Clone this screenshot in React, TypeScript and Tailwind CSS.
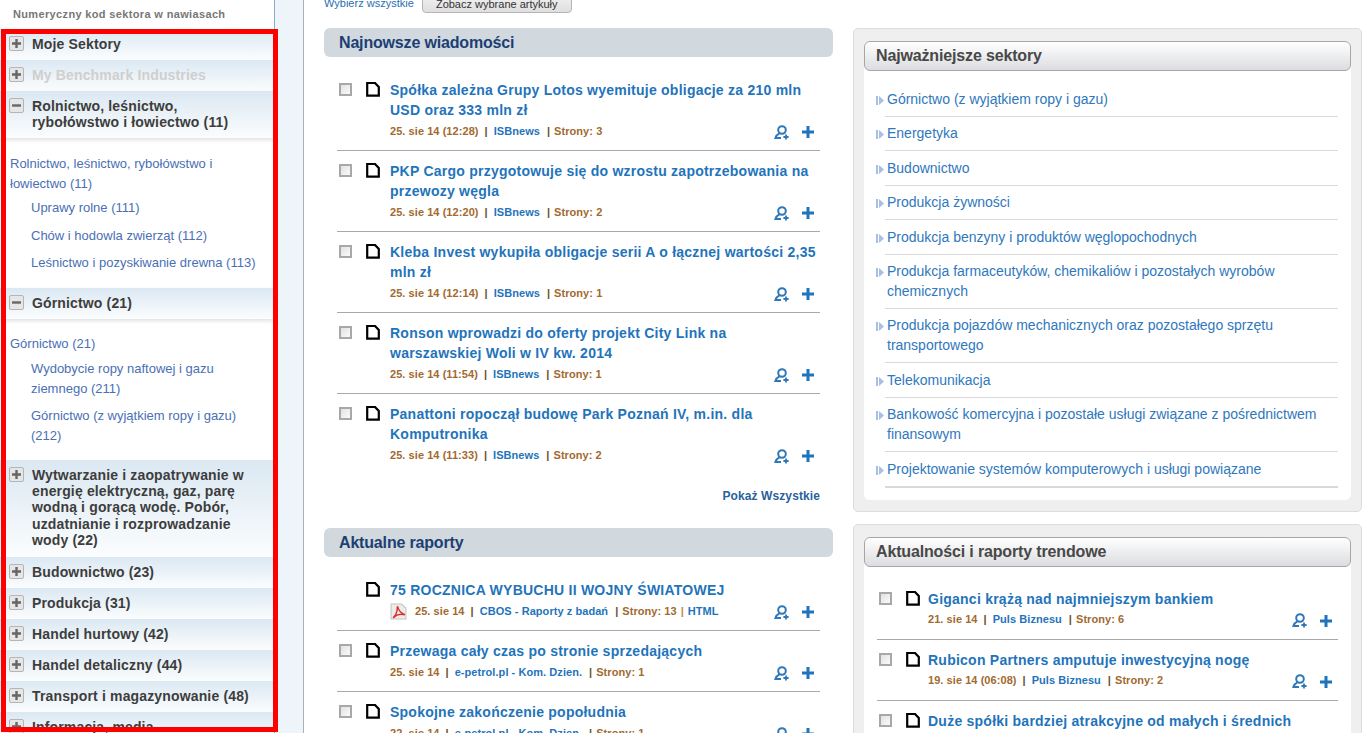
import React from "react";

const Doc = () => (
  <svg width="14" height="15" viewBox="0 0 14 15" className="shrink-0">
    <path d="M1.2 1H9L12.8 5V13.7H1.2Z" fill="#fff" stroke="#000" strokeWidth="2.2" />
  </svg>
);
const Box = () => (
  <span className="block w-[13px] h-[13px] shrink-0 border-2 border-[#a8a8a8] bg-gradient-to-br from-[#e2e2e2] to-[#fafafa]" />
);
const Actions = () => (
  <span className="flex items-center gap-[12px] pr-[6px] translate-y-[1px] shrink-0">
    <svg width="16" height="15" viewBox="0 0 16 15">
      <circle cx="8" cy="5" r="3.8" fill="none" stroke="#2f78b7" strokeWidth="2" />
      <path d="M5.4 8.4C3.4 9.4 2 10.8 1.4 13H7" fill="none" stroke="#2f78b7" strokeWidth="2" />
      <path d="M12 9.4V14.6M9.4 12H14.6" stroke="#2f78b7" strokeWidth="1.8" />
    </svg>
    <svg width="12" height="12" viewBox="0 0 12 12">
      <path d="M6 0V12M0 6H12" stroke="#1f74bb" strokeWidth="3" />
    </svg>
  </span>
);
const Pdf = () => (
  <svg width="17" height="17" viewBox="0 0 16 16" className="shrink-0 mr-[8px]">
    <path d="M1 1H11L15 5V15H1Z" fill="#ececec" stroke="#c4c4c4" />
    <path d="M7 3C7 7 6 11 3 14C6 11 10 10 14 11C11 10 8 7 7 3Z" fill="none" stroke="#d8322b" strokeWidth="1.4" />
  </svg>
);

const Toggle = ({ open }: { open?: boolean }) => (
  <span className="flex items-center justify-center w-[15px] h-[15px] shrink-0 rounded-[2px] border border-[#b5b5b5] bg-[#e6e6e6]">
    <svg width="9" height="9" viewBox="0 0 9 9">
      <path d={open ? "M0 4.5H9" : "M4.5 0V9M0 4.5H9"} stroke="#666" strokeWidth="2.4" />
    </svg>
  </span>
);

const Head = ({
  label,
  open,
  muted,
  h,
  shadow,
}: {
  label: string;
  open?: boolean;
  muted?: boolean;
  h: string;
  shadow?: boolean;
}) => (
  <div
    className={`flex gap-[8px] pl-[9px] pr-[8px] pt-[7px] bg-gradient-to-b from-[#dbe8f2] to-[#fbfdfe] ${h} ${
      shadow ? "shadow-[0_2px_4px_rgba(0,0,0,0.12)]" : ""
    }`}
  >
    <Toggle open={open} />
    <span
      className={`text-[14px] leading-[16.2px] font-bold tracking-[0.15px] ${
        muted ? "text-[#cfcfcf]" : "text-[#3d3d3d]"
      }`}
    >
      {label}
    </span>
  </div>
);

const SubTop = ({ children }: { children: React.ReactNode }) => (
  <div className="pl-[10px] pr-[20px] text-[13px] leading-[19.5px] text-[#4a6fb5]">{children}</div>
);
const Sub = ({ children, mb }: { children: React.ReactNode; mb: string }) => (
  <div className={`pl-[31px] pr-[12px] text-[13px] leading-[20px] text-[#4a6fb5] ${mb}`}>{children}</div>
);

type Item = {
  title: React.ReactNode;
  date: string;
  source: string;
  pages: string;
  noBox?: boolean;
  pdf?: boolean;
  html?: boolean;
};

const Row = ({ it, right, last }: { it: Item; right?: boolean; last?: boolean }) => (
  <div className={`flex pb-[8px] ${last ? "" : "border-b border-[#a9a9a9]"}`}>
    <div className={`flex shrink-0 pt-[2px] pl-[2px] ${right ? "w-[51px]" : "w-[53px]"}`}>
      <span className="w-[27px] pt-[1px] shrink-0">{!it.noBox && <Box />}</span>
      <Doc />
    </div>
    <div className="flex-1 min-w-0">
      <div className="text-[14px] leading-[20px] font-bold tracking-[0.24px] text-[#1f74bb]">{it.title}</div>
      <div className="flex items-center justify-between h-[22px]">
        <div className="flex items-center text-[11px] font-bold tracking-[0.06px]">
          {it.pdf && <Pdf />}
          <span className="text-[#a16a30]">{it.date}</span>
          <span className="mx-[6px] text-[#6b5030]">|</span>
          <span className="text-[#1f74bb]">{it.source}</span>
          <span className="ml-[7px] mr-[4px] text-[#6b5030]">|</span>
          <span className="text-[#a16a30]">{it.pages}</span>
          {it.html && (
            <>
              <span className="mx-[4px] text-[#c08a3c]">|</span>
              <span className="text-[#1f74bb]">HTML</span>
            </>
          )}
        </div>
        <Actions />
      </div>
    </div>
  </div>
);

const news: Item[] = [
  { title: "Spółka zależna Grupy Lotos wyemituje obligacje za 210 mln USD oraz 333 mln zł", date: "25. sie 14 (12:28)", source: "ISBnews", pages: "Strony: 3" },
  { title: "PKP Cargo przygotowuje się do wzrostu zapotrzebowania na przewozy węgla", date: "25. sie 14 (12:20)", source: "ISBnews", pages: "Strony: 2" },
  { title: "Kleba Invest wykupiła obligacje serii A o łącznej wartości 2,35 mln zł", date: "25. sie 14 (12:14)", source: "ISBnews", pages: "Strony: 1" },
  { title: "Ronson wprowadzi do oferty projekt City Link na warszawskiej Woli w IV kw. 2014", date: "25. sie 14 (11:54)", source: "ISBnews", pages: "Strony: 1" },
  { title: "Panattoni ropoczął budowę Park Poznań IV, m.in. dla Komputronika", date: "25. sie 14 (11:33)", source: "ISBnews", pages: "Strony: 2" },
];
const reports: Item[] = [
  { title: "75 ROCZNICA WYBUCHU II WOJNY ŚWIATOWEJ", date: "25. sie 14", source: "CBOS - Raporty z badań", pages: "Strony: 13", noBox: true, pdf: true, html: true },
  { title: "Przewaga cały czas po stronie sprzedających", date: "25. sie 14", source: "e-petrol.pl - Kom. Dzien.", pages: "Strony: 1" },
  { title: "Spokojne zakończenie popołudnia", date: "22. sie 14", source: "e-petrol.pl - Kom. Dzien.", pages: "Strony: 1" },
];
const trend: Item[] = [
  { title: "Giganci krążą nad najmniejszym bankiem", date: "21. sie 14", source: "Puls Biznesu", pages: "Strony: 6" },
  { title: "Rubicon Partners amputuje inwestycyjną nogę", date: "19. sie 14 (06:08)", source: "Puls Biznesu", pages: "Strony: 2" },
  { title: "Duże spółki bardziej atrakcyjne od małych i średnich", date: "19. sie 14", source: "Puls Biznesu", pages: "Strony: 2" },
];
const sectors = [
  "Górnictwo (z wyjątkiem ropy i gazu)",
  "Energetyka",
  "Budownictwo",
  "Produkcja żywności",
  "Produkcja benzyny i produktów węglopochodnych",
  "Produkcja farmaceutyków, chemikaliów i pozostałych wyrobów chemicznych",
  "Produkcja pojazdów mechanicznych oraz pozostałego sprzętu transportowego",
  "Telekomunikacja",
  "Bankowość komercyjna i pozostałe usługi związane z pośrednictwem finansowym",
  "Projektowanie systemów komputerowych i usługi powiązane",
];

const Bar = ({ children }: { children: React.ReactNode }) => (
  <div className="h-[29px] rounded-[6px] bg-[#d1d8de] pl-[15px] text-[16px] leading-[29px] font-bold tracking-[-0.17px] text-[#1c3f73]">
    {children}
  </div>
);
const PanelHead = ({ children }: { children: React.ReactNode }) => (
  <div className="h-[30px] rounded-[6px] border border-[#a6a6a6] bg-gradient-to-b from-[#ffffff] to-[#dcdde0] pl-[11px] text-[16px] leading-[27px] font-bold tracking-[-0.15px] text-[#484848]">
    {children}
  </div>
);

export default function App() {
  return (
    <div className="relative h-[733px] overflow-hidden flex bg-white font-['Liberation_Sans',Arial,sans-serif]">
      <aside className="w-[275px] shrink-0 h-full overflow-hidden border-r border-[#8fabd0] bg-white">
        <div className="h-[29px] pl-[13px] pt-[7px] text-[11px] leading-[14px] font-bold text-[#777] tracking-[0.35px]">
          Numeryczny kod sektora w nawiasach
        </div>
        <Head label="Moje Sektory" h="h-[31px]" />
        <Head label="My Benchmark Industries" muted h="h-[31px]" />
        <Head label="Rolnictwo, leśnictwo, rybołówstwo i łowiectwo (11)" open h="h-[47px]" shadow />
        <div className="h-[150px] pt-[16px]">
          <SubTop>Rolnictwo, leśnictwo, rybołówstwo i łowiectwo (11)</SubTop>
          <div className="pt-[5px]">
            <Sub mb="mb-[7.5px]">Uprawy rolne (111)</Sub>
            <Sub mb="mb-[7.5px]">Chów i hodowla zwierząt (112)</Sub>
            <Sub mb="">Leśnictwo i pozyskiwanie drewna (113)</Sub>
          </div>
        </div>
        <Head label="Górnictwo (21)" open h="h-[31px]" shadow />
        <div className="h-[141px] pt-[15px]">
          <SubTop>Górnictwo (21)</SubTop>
          <div className="pt-[5px]">
            <Sub mb="mb-[7px]">Wydobycie ropy naftowej i gazu ziemnego (211)</Sub>
            <Sub mb="">Górnictwo (z wyjątkiem ropy i gazu) (212)</Sub>
          </div>
        </div>
        <Head label="Wytwarzanie i zaopatrywanie w energię elektryczną, gaz, parę wodną i gorącą wodę. Pobór, uzdatnianie i rozprowadzanie wody (22)" h="h-[97px]" />
        <Head label="Budownictwo (23)" h="h-[31px]" />
        <Head label="Produkcja (31)" h="h-[31px]" />
        <Head label="Handel hurtowy (42)" h="h-[31px]" />
        <Head label="Handel detaliczny (44)" h="h-[31px]" />
        <Head label="Transport i magazynowanie (48)" h="h-[31px]" />
        <Head label="Informacja, media" h="h-[31px]" />
      </aside>
      <div className="w-[29px] shrink-0 h-full bg-[#eef5fa] border-r border-[#b0b0b0]" />
      <main className="flex-1 min-w-0 pl-[20px] pr-[7px] h-full overflow-hidden">
        <div className="flex items-end h-[13px] overflow-hidden mb-[15px]">
          <span className="text-[11px] leading-[13px] text-[#2a6fb0] mb-[3px] mr-[8px]">Wybierz wszystkie</span>
          <span className="w-[150px] h-[24px] shrink-0 rounded-[4px] border border-[#b5b5b5] bg-gradient-to-b from-[#f7f7f7] to-[#dfdfdf] text-center text-[11px] leading-[28px] text-[#333]">
            Zobacz wybrane artykuły
          </span>
        </div>
        <div className="flex gap-[20px]">
          <section className="w-[509px] shrink-0">
            <Bar>Najnowsze wiadomości</Bar>
            <div className="pl-[13px] pr-[13px] pt-[23px]">
              {news.map((n, i) => (
                <div key={i} className={i ? "pt-[10px]" : ""}>
                  <Row it={n} last={i === news.length - 1} />
                </div>
              ))}
              <div className="text-right text-[12px] leading-[14px] font-bold text-[#2b5f9e] pt-[15px] tracking-[0.1px]">
                Pokaż Wszystkie
              </div>
            </div>
            <div className="pt-[25px]">
              <Bar>Aktualne raporty</Bar>
            </div>
            <div className="pl-[13px] pr-[13px] pt-[23px]">
              {reports.map((n, i) => (
                <div key={i} className={i ? "pt-[10px]" : ""}>
                  <Row it={n} />
                </div>
              ))}
            </div>
          </section>
          <section className="flex-1 min-w-0">
            <div className="rounded-[5px] border border-[#dcdcdc] bg-[#efefef] px-[10px] pt-[12px] pb-[11px]">
              <div className="rounded-[6px] bg-white pb-[12px]">
                <PanelHead>Najważniejsze sektory</PanelHead>
                <ul className="pt-[18px] pr-[13px]">
                  {sectors.map((s, i) => (
                    <li
                      key={s}
                      className={`relative ml-[21px] pl-[2px] text-[14px] leading-[20px] text-[#2f78bd] pb-[7px] border-[#d9d9d9] ${
                        i === sectors.length - 1 ? "border-b-2" : "border-b mb-[6.4px]"
                      }`}
                    >
                      <svg width="8" height="9" viewBox="0 0 8 9" className="absolute left-[-9px] top-[7px]">
                        <path d="M0 0H2V9H0ZM3 0L8 4.5L3 9Z" fill="#a8bfe4" />
                      </svg>
                      {s}
                    </li>
                  ))}
                </ul>
              </div>
            </div>
            <div className="mt-[12px] rounded-[5px] border border-[#dcdcdc] bg-[#efefef] px-[10px] pt-[12px]">
              <div className="rounded-[6px] bg-white">
                <PanelHead>Aktualności i raporty trendowe</PanelHead>
                <div className="pl-[13px] pr-[13px] pt-[22px]">
                  {trend.map((n, i) => (
                    <div key={i} className={i ? "pt-[10px]" : ""}>
                      <Row it={n} right />
                    </div>
                  ))}
                </div>
              </div>
            </div>
          </section>
        </div>
      </main>
      <div className="absolute left-[1px] top-[29px] w-[277px] h-[703px] border-[5px] border-[#ff0000] pointer-events-none" />
    </div>
  );
}
